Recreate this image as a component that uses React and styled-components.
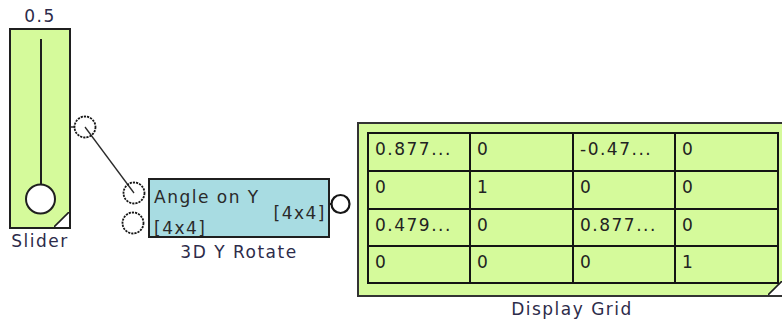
import React from 'react';
import styled, { createGlobalStyle } from 'styled-components';

const GlobalStyle = createGlobalStyle`
  html, body { margin: 0; padding: 0; background: #ffffff; }
  body { font-family: "DejaVu Sans", Verdana, sans-serif; overflow: hidden; }
`;

const GREEN = '#d5fa9b';
const CYAN = '#a8dce2';
const INK = '#1f1f1f';

const Canvas = styled.div`
  position: relative;
  width: 782px;
  height: 326px;
  overflow: hidden;
  background: #ffffff;
`;

const Node = styled.div`
  position: absolute;
  left: ${(p) => p.$x}px;
  top: ${(p) => p.$y}px;
  width: ${(p) => p.$w}px;
  display: flex;
  flex-direction: column;
  align-items: center;
`;

const Caption = styled.div`
  font-size: 17px;
  line-height: 20px;
  letter-spacing: 1.5px;
  color: #2d2b4a;
  white-space: nowrap;
  margin-top: ${(p) => p.$gap || 0}px;
  padding-left: ${(p) => p.$shift || 0}px;
`;

const SliderBody = styled.div`
  position: relative;
  box-sizing: border-box;
  width: 62px;
  height: 201px;
  margin-top: 2px;
  border: 2px solid ${INK};
  background: ${GREEN};
`;

const SliderArt = styled.svg`
  display: block;
  width: 58px;
  height: 197px;
`;

const Corner = styled.svg`
  position: absolute;
  right: 0;
  bottom: 0;
  width: ${(p) => p.$s}px;
  height: ${(p) => p.$s}px;
`;

const BlockBody = styled.div`
  box-sizing: border-box;
  width: 182px;
  height: 60px;
  border: 2px solid ${INK};
  background: ${CYAN};
  padding: 7px 2px 0 4px;
  display: grid;
  grid-template-columns: 1fr auto;
  grid-template-rows: 16px 15px 20px;
  font-size: 17px;
  line-height: 20px;
  letter-spacing: 1.5px;
  color: #2a2a2a;
  white-space: nowrap;
`;

const PinText = styled.div`
  grid-row: ${(p) => p.$row};
  grid-column: ${(p) => p.$col};
  justify-self: ${(p) => p.$align || 'start'};
`;

const GridFrame = styled.div`
  position: relative;
  box-sizing: border-box;
  width: 427px;
  height: 175px;
  border: 2px solid #333333;
  background: ${GREEN};
  padding: 8px 3px 11px 8px;
`;

const GridTable = styled.div`
  display: grid;
  grid-template-columns: 100px 101px 100px 101px;
  grid-template-rows: 36px 36px 35px 35px;
  gap: 2px;
  padding: 2px;
  width: fit-content;
  background: #141414;
`;

const Cell = styled.div`
  display: flex;
  align-items: center;
  padding: 0 6px 6px 6px;
  background: ${GREEN};
  font-size: 17px;
  line-height: 20px;
  letter-spacing: 1.5px;
  color: #222222;
  white-space: nowrap;
  overflow: hidden;
`;

const Overlay = styled.svg`
  position: absolute;
  left: 0;
  top: 0;
  width: 782px;
  height: 326px;
  pointer-events: none;
`;

const cells = [
  ['0.877...', '0', '-0.47...', '0'],
  ['0', '1', '0', '0'],
  ['0.479...', '0', '0.877...', '0'],
  ['0', '0', '0', '1'],
];

function CornerFold({ size }) {
  return (
    <Corner $s={size} viewBox={`0 0 ${size} ${size}`}>
      <polygon points={`${size},0 ${size},${size} 0,${size}`} fill="#ffffff" />
      <line x1="0" y1={size} x2={size} y2="0" stroke={INK} strokeWidth="1.6" />
    </Corner>
  );
}

function Port({ cx, cy, r = 10, dotted = true }) {
  return (
    <circle
      cx={cx}
      cy={cy}
      r={r}
      fill="none"
      stroke="#161616"
      strokeWidth={dotted ? 1.8 : 2.2}
      strokeDasharray={dotted ? '2.2 1' : undefined}
    />
  );
}

export default function App() {
  return (
    <>
      <GlobalStyle />
      <Canvas>
        <Node $x={9} $y={6} $w={62}>
          <Caption>0.5</Caption>
          <SliderBody>
            <SliderArt viewBox="0 0 58 197">
              <line x1="30" y1="9" x2="30" y2="155" stroke={INK} strokeWidth="2" />
              <circle cx="29.5" cy="169" r="14.5" fill="#ffffff" stroke={INK} strokeWidth="2" />
            </SliderArt>
            <CornerFold size={15} />
          </SliderBody>
          <Caption $gap={2}>Slider</Caption>
        </Node>

        <Node $x={148} $y={178} $w={182}>
          <BlockBody>
            <PinText $row={1} $col="1 / span 2">Angle on Y</PinText>
            <PinText $row={2} $col={2} $align="end">[4x4]</PinText>
            <PinText $row={3} $col={1}>[4x4]</PinText>
          </BlockBody>
          <Caption $gap={4}>3D Y Rotate</Caption>
        </Node>

        <Node $x={357} $y={122} $w={427}>
          <GridFrame>
            <GridTable>
              {cells.flat().map((v, i) => (
                <Cell key={i}>{v}</Cell>
              ))}
            </GridTable>
            <CornerFold size={14} />
          </GridFrame>
          <Caption $gap={2} $shift={3}>Display Grid</Caption>
        </Node>

        <Overlay viewBox="0 0 782 326">
          <line x1="85" y1="127" x2="134" y2="193" stroke="#2a2a2a" strokeWidth="1.3" />
          <line x1="71" y1="127" x2="75" y2="127" stroke="#2a2a2a" strokeWidth="1.5" />
          <Port cx={85} cy={127} r={10.5} />
          <Port cx={134} cy={193} r={10.5} />
          <Port cx={133} cy={223} r={10.5} />
          <line x1="330" y1="204" x2="332" y2="204" stroke="#1a1a1a" strokeWidth="2" />
          <Port cx={340.5} cy={204} r={9} dotted={false} />
        </Overlay>
      </Canvas>
    </>
  );
}
